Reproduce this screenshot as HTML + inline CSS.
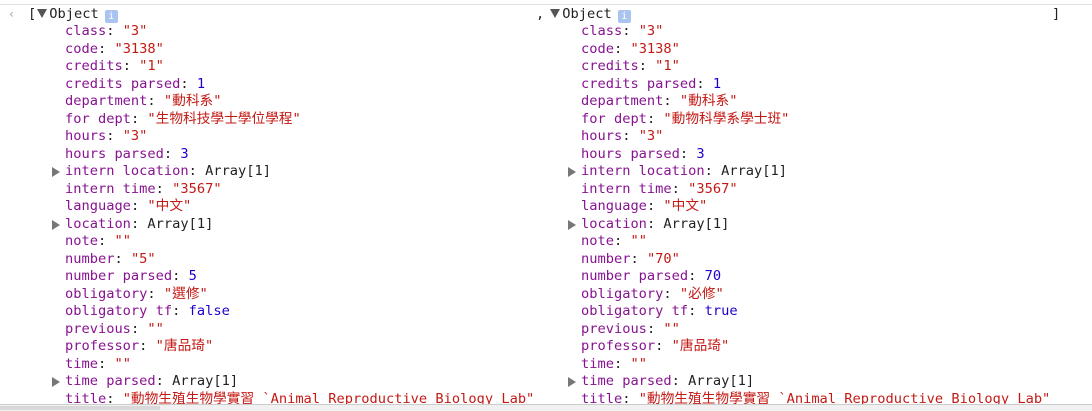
<!DOCTYPE html>
<html><head><meta charset="utf-8"><style>
body{margin:0;width:1092px;height:410px;overflow:hidden;background:#fff;position:relative;font-family:"DejaVu Sans Mono","Liberation Mono","Noto Sans CJK TC",monospace;font-size:13.7px;color:#222;}
.top{position:absolute;left:0;right:0;top:4px;height:1px;background:#e0e0e0}
.col{position:absolute;top:6px;line-height:17.5px;white-space:nowrap}
.k{color:#881391}.s{color:#c41a16}.n{color:#1c00cf}
.l{padding-left:16px;position:relative;white-space:pre;height:17.5px}
.t{position:absolute;left:3px;top:4px;width:0;height:0;border-top:5px solid transparent;border-bottom:5px solid transparent;border-left:8px solid #777}
.d{display:inline-block;width:0;height:0;border-left:5px solid transparent;border-right:5px solid transparent;border-top:9px solid #555;margin:0 2px 0 1px;vertical-align:0px}
.i{display:inline-block;width:13px;height:13px;background:#a9c4f0;color:#fff;font-size:10px;line-height:13px;text-align:center;border-radius:2px;margin-left:6px;vertical-align:-1px}
.sb{position:absolute;left:0;right:0;top:404px;height:6px;background:#f1f1f1;border-top:1px solid #ccc}
.th{position:absolute;left:0;top:406px;width:160px;height:4px;background:#d8d8d8}
</style></head><body>
<div class="top"></div>
<div style="position:absolute;left:8px;top:6px;line-height:17.5px;color:#aaa;font-size:12px">&lsaquo;</div>
<div class="col" style="left:28px">[<span class="d"></span>Object<span class="i">i</span></div>
<div class="col" style="left:536px">,<span class="d" style="margin-left:6px"></span>Object<span class="i">i</span></div>
<div class="col" style="left:1052px">]</div>
<div class="col" style="left:49px;top:23px"><div class="l"><span class="k">class</span>: <span class="s">"3"</span></div><div class="l"><span class="k">code</span>: <span class="s">"3138"</span></div><div class="l"><span class="k">credits</span>: <span class="s">"1"</span></div><div class="l"><span class="k">credits parsed</span>: <span class="n">1</span></div><div class="l"><span class="k">department</span>: <span class="s">"動科系"</span></div><div class="l"><span class="k">for dept</span>: <span class="s">"生物科技學士學位學程"</span></div><div class="l"><span class="k">hours</span>: <span class="s">"3"</span></div><div class="l"><span class="k">hours parsed</span>: <span class="n">3</span></div><div class="l"><span class="t"></span><span class="k">intern location</span>: Array[1]</div><div class="l"><span class="k">intern time</span>: <span class="s">"3567"</span></div><div class="l"><span class="k">language</span>: <span class="s">"中文"</span></div><div class="l"><span class="t"></span><span class="k">location</span>: Array[1]</div><div class="l"><span class="k">note</span>: <span class="s">""</span></div><div class="l"><span class="k">number</span>: <span class="s">"5"</span></div><div class="l"><span class="k">number parsed</span>: <span class="n">5</span></div><div class="l"><span class="k">obligatory</span>: <span class="s">"選修"</span></div><div class="l"><span class="k">obligatory tf</span>: <span class="n">false</span></div><div class="l"><span class="k">previous</span>: <span class="s">""</span></div><div class="l"><span class="k">professor</span>: <span class="s">"唐品琦"</span></div><div class="l"><span class="k">time</span>: <span class="s">""</span></div><div class="l"><span class="t"></span><span class="k">time parsed</span>: Array[1]</div><div class="l"><span class="k">title</span>: <span class="s">"動物生殖生物學實習 `Animal Reproductive Biology Lab"</span></div></div>
<div class="col" style="left:565px;top:23px"><div class="l"><span class="k">class</span>: <span class="s">"3"</span></div><div class="l"><span class="k">code</span>: <span class="s">"3138"</span></div><div class="l"><span class="k">credits</span>: <span class="s">"1"</span></div><div class="l"><span class="k">credits parsed</span>: <span class="n">1</span></div><div class="l"><span class="k">department</span>: <span class="s">"動科系"</span></div><div class="l"><span class="k">for dept</span>: <span class="s">"動物科學系學士班"</span></div><div class="l"><span class="k">hours</span>: <span class="s">"3"</span></div><div class="l"><span class="k">hours parsed</span>: <span class="n">3</span></div><div class="l"><span class="t"></span><span class="k">intern location</span>: Array[1]</div><div class="l"><span class="k">intern time</span>: <span class="s">"3567"</span></div><div class="l"><span class="k">language</span>: <span class="s">"中文"</span></div><div class="l"><span class="t"></span><span class="k">location</span>: Array[1]</div><div class="l"><span class="k">note</span>: <span class="s">""</span></div><div class="l"><span class="k">number</span>: <span class="s">"70"</span></div><div class="l"><span class="k">number parsed</span>: <span class="n">70</span></div><div class="l"><span class="k">obligatory</span>: <span class="s">"必修"</span></div><div class="l"><span class="k">obligatory tf</span>: <span class="n">true</span></div><div class="l"><span class="k">previous</span>: <span class="s">""</span></div><div class="l"><span class="k">professor</span>: <span class="s">"唐品琦"</span></div><div class="l"><span class="k">time</span>: <span class="s">""</span></div><div class="l"><span class="t"></span><span class="k">time parsed</span>: Array[1]</div><div class="l"><span class="k">title</span>: <span class="s">"動物生殖生物學實習 `Animal Reproductive Biology Lab"</span></div></div>
<div class="sb"></div><div class="th"></div>
</body></html>
